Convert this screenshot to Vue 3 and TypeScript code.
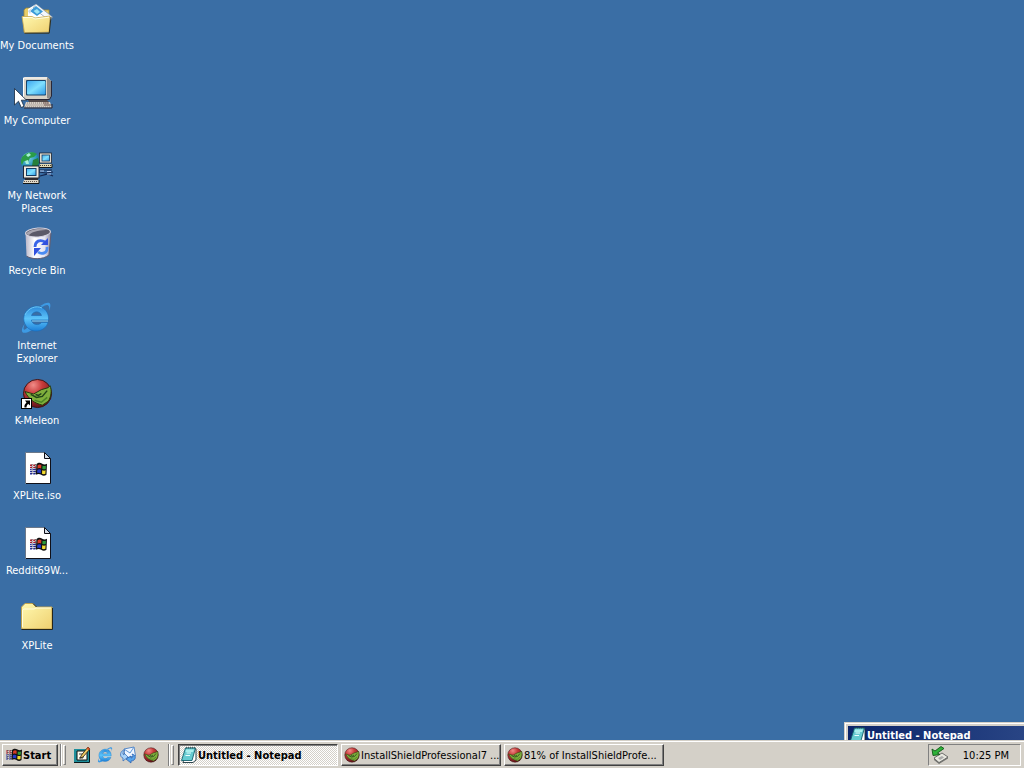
<script setup lang="ts">
import { ref } from 'vue'

interface DesktopItem {
  label: string
  icon: string
}

interface Task {
  label: string
  icon: string
}

const items: DesktopItem[] = [
  { label: 'My Documents', icon: 'documents' },
  { label: 'My Computer', icon: 'computer' },
  { label: 'My Network Places', icon: 'network' },
  { label: 'Recycle Bin', icon: 'recycle' },
  { label: 'Internet Explorer', icon: 'ie' },
  { label: 'K-Meleon', icon: 'kmeleon-link' },
  { label: 'XPLite.iso', icon: 'file' },
  { label: 'Reddit69W...', icon: 'file' },
  { label: 'XPLite', icon: 'folder' },
]

const quickLaunch: DesktopItem[] = [
  { label: 'Show Desktop', icon: 'show-desktop' },
  { label: 'Internet Explorer', icon: 'ie' },
  { label: 'Outlook Express', icon: 'mail' },
  { label: 'K-Meleon', icon: 'kmeleon' },
]

const tasks: Task[] = [
  { label: 'Untitled - Notepad', icon: 'notepad' },
  { label: 'InstallShieldProfessional7 ...', icon: 'kmeleon' },
  { label: '81% of InstallShieldProfe...', icon: 'kmeleon' },
]

const activeTask = ref(0)
</script>

<template>
  <div class="screen">
    <svg class="sprite" aria-hidden="true">
      <defs>
        <linearGradient id="g-folder" x1="0" y1="0" x2="1" y2="1">
          <stop offset="0" stop-color="#fff9b0" />
          <stop offset="1" stop-color="#efd070" />
        </linearGradient>
        <linearGradient id="g-screen" x1="0" y1="0" x2="1" y2="1">
          <stop offset="0" stop-color="#3fa8f0" />
          <stop offset="0.5" stop-color="#7fe0ff" />
          <stop offset="1" stop-color="#2f9be8" />
        </linearGradient>
        <linearGradient id="g-bin" x1="0" y1="0" x2="1" y2="0">
          <stop offset="0" stop-color="#b9b6c8" />
          <stop offset="0.35" stop-color="#ffffff" />
          <stop offset="0.75" stop-color="#e4e4f2" />
          <stop offset="1" stop-color="#8c8aa0" />
        </linearGradient>
        <linearGradient id="g-ie" x1="0" y1="0" x2="0" y2="1">
          <stop offset="0" stop-color="#2a86d8" />
          <stop offset="0.5" stop-color="#5cc4fa" />
          <stop offset="1" stop-color="#1c7fd8" />
        </linearGradient>
        <radialGradient id="g-ball" cx="0.35" cy="0.2" r="0.8">
          <stop offset="0" stop-color="#f08c88" />
          <stop offset="0.4" stop-color="#c83a3a" />
          <stop offset="1" stop-color="#64141a" />
        </radialGradient>
        <radialGradient id="g-globe" cx="0.35" cy="0.3" r="0.8">
          <stop offset="0" stop-color="#7fd8e8" />
          <stop offset="0.6" stop-color="#2490b8" />
          <stop offset="1" stop-color="#0c4c70" />
        </radialGradient>
      </defs>

      <symbol id="flag" viewBox="0 0 16 14">
        <path d="M6 2C8 0 10 .5 11.500 1.500S14.500 2.500 16 1.500L15.500 12C13.500 13.500 12 13 10.500 12S7.500 11 5.500 12Z" fill="#111" />
        <path d="M7.200 3C8.500 2 9.700 2.200 10.700 2.800L10.500 6C9.400 5.400 8.300 5.300 7 6Z" fill="#d83a24" />
        <path d="M11.800 3.400C13 3.900 14 3.900 15 3.400L14.800 6.500C13.800 7.100 12.600 6.900 11.600 6.500Z" fill="#2d9a38" />
        <path d="M6.900 7.200C8.200 6.500 9.400 6.600 10.400 7.200L10.200 10.600C9.200 10 8 9.900 6.700 10.400Z" fill="#2438c8" />
        <path d="M11.500 7.700C12.600 8.200 13.700 8.200 14.700 7.800L14.500 11C13.500 11.700 12.300 11.500 11.300 11Z" fill="#f4dc30" />
        <path d="M0 3h2M3 3h2M0 5h2M3 5h2.500" stroke="#b02030" stroke-width="1.200" />
        <path d="M0 7h1.500M2.500 7h3M0 9h2M3 9h2.500M0 11h2M3 11h2" stroke="#2830a0" stroke-width="1.200" />
        <path d="M2 2v10M5 2v10" stroke="#111" stroke-width=".8" stroke-dasharray="1 1" />
      </symbol>

      <symbol id="documents" viewBox="0 0 32 32" overflow="visible">
        <path d="M4 30V8L6 6H11L13 8H29V29Z" fill="#e8cd68" stroke="#a08838" stroke-width=".8" />
        <path d="M8 14V7L16 2L31 14V18H8Z" fill="#fff" />
        <path d="M16 2L32.500 15L30 19L13 6Z" fill="#f4f8fc" stroke="#6d8298" stroke-width=".6" />
        <path d="M16 4L23 9.500L17 14L10 9Z" fill="#3c9ad8" />
        <path d="M13.500 9L17 7L20 10L17 12Z" fill="#9be4f4" />
        <path d="M8 9L12 6L10 12Z" fill="#c8d8e8" />
        <path d="M2 14.500L12 14.500L15 16L30 14L29 30L4.500 31Z" fill="url(#g-folder)" stroke="#c8a850" stroke-width=".8" />
        <path d="M4.500 31.200H29.200L31 15" fill="none" stroke="#303020" />
        <path d="M3 15.500H12L15 17L29 15.200" fill="none" stroke="#fffde0" />
      </symbol>

      <symbol id="computer" viewBox="0 0 32 32" overflow="visible">
        <path d="M3 1L5 0H27L31 4V19L29 22H5L3 20Z" fill="#d8d2c6" />
        <path d="M27 0L31 4V19L29 22L27 21Z" fill="#8e8a88" />
        <path d="M3.500 20V1H27" fill="none" stroke="#fff" />
        <path d="M5 22.500H29.500L31.500 19V4" fill="none" stroke="#292838" />
        <rect x="6" y="3" width="20" height="15.500" rx="1" fill="#18446c" />
        <rect x="7" y="4" width="18.500" height="13.500" rx="1" fill="url(#g-screen)" />
        <path d="M8 23H27L29 25H9Z" fill="#504848" />
        <path d="M6 25H30L32 30.500H4Z" fill="#d7d0c6" />
        <path d="M7 26H29M6.500 28H29.500M5 30H31" stroke="#8a7f78" stroke-dasharray="1 1" />
        <path d="M4 31H32V27" fill="none" stroke="#302830" />
        <path d="M23 26h6M24 28h7" stroke="#785f58" />
      </symbol>

      <symbol id="network" viewBox="0 0 32 32" overflow="visible">
        <circle cx="10.500" cy="9.500" r="9.500" fill="url(#g-globe)" />
        <path d="M3 4C7 0 13-1 17 2L14 5L10 6L8 10L4 9L2 13C0 10 1 6 3 4Z" fill="#2b9c48" />
        <path d="M13 8L18 6L19 11L16 16L12 14Z" fill="#267f3c" />
        <path d="M6 3L9 1L11 3L8 5M5 9L8 8L9 12L6 12Z" fill="#a8f0d8" />
        <path d="M3 16L6 18" stroke="#0f4838" />
        <rect x="19.500" y="1" width="12" height="10" fill="#e2ddd1" stroke="#1b2230" stroke-width=".8" />
        <rect x="22" y="3" width="7.500" height="6" fill="url(#g-screen)" stroke="#123a60" stroke-width=".8" />
        <path d="M20 12H32V15H19Z" fill="#e0d8b4" />
        <path d="M20 13.500H31" stroke="#4a4338" stroke-dasharray="1 1" />
        <path d="M19 15.500H32V12" fill="none" stroke="#171818" />
        <path d="M19 18H32M19 20L26 21L33 20M20 24L28 22L33 24" fill="none" stroke="#15264d" stroke-width="1.200" />
        <path d="M20 19H24M27 22H31M27 19.500h4" stroke="#b0c8ef" />
        <rect x="3.500" y="14" width="15.500" height="12" fill="#ece8df" stroke="#171b2a" stroke-width=".9" />
        <rect x="6.500" y="16.500" width="9.500" height="7" fill="url(#g-screen)" stroke="#153c64" />
        <path d="M5 26H18V28H5Z" fill="#302c30" />
        <path d="M4 28H19V31H3Z" fill="#dfd8c8" />
        <path d="M4 29.500H18" stroke="#665850" stroke-dasharray="1 1" />
        <path d="M3 31.500H19V28" fill="none" stroke="#171818" />
      </symbol>

      <symbol id="recycle" viewBox="0 0 32 32" overflow="visible">
        <path d="M5.500 6L6.500 29C11 32 23 33 29 28L31 5Z" fill="url(#g-bin)" />
        <path d="M6.500 29C11 32.500 23 33 29 28L31 6" fill="none" stroke="#625e72" />
        <ellipse cx="18" cy="5.500" rx="12.500" ry="4.500" transform="rotate(-4 18 5.500)" fill="#5b5968" stroke="#d5d3df" />
        <path d="M6 7C9 2 20 1 28 3C22 3 12 4 9 8Z" fill="#a8a5b0" />
        <path d="M15 20C15 14 20 12 25 15" fill="none" stroke="#3864e8" stroke-width="2.800" />
        <path d="M21 18L28 18L28 11Z" fill="#3151df" />
        <path d="M27 20C28 26 22 28 18 25" fill="none" stroke="#4b8bf2" stroke-width="2.800" />
        <path d="M21 21L14 21L14 29Z" fill="#3151df" />
      </symbol>

      <symbol id="ie" viewBox="0 0 32 32" overflow="visible">
        <path d="M5 21C-1 30 2 34 12 28L8 25C4 29 2 29 5 21ZM20 4C28-1 33-1 29 9C30 3 28 1 22 5Z" fill="#3d9ae4" />
        <path fill-rule="evenodd" d="M28.500 18H11.500C12 23 19 24 21.500 20.500H28C25.500 29 15 31.500 8.500 26.500C2 21 2.500 12 8 7.500C17 0 29.500 6 28.500 18ZM11.500 13.500H21.500C20.500 8.500 13 8.500 11.500 13.500Z" fill="url(#g-ie)" stroke="#176bb8" stroke-width=".6" />
        <path d="M5 13C8 6 16 3 22 6" fill="none" stroke="#6cc6f4" stroke-width="1" />
        <path d="M12 19H28" stroke="#8ad9ff" stroke-width="1" />
      </symbol>

      <symbol id="kmeleon" viewBox="0 0 32 32">
        <circle cx="16" cy="16" r="14.500" fill="url(#g-ball)" stroke="#3b1414" />
        <path d="M3 14L12 16.500L20 12L27 10L29 8C31 13 30 20 27 24L21 28C13 26 7 22 3 14Z" fill="#7fae3c" stroke="#24380e" />
        <path d="M9 17L15 20L21 19L26 13M14 17L17 18L20 16" fill="none" stroke="#22441a" stroke-width="1.500" />
        <path d="M13 23L20 25L26 20" fill="none" stroke="#4a8425" stroke-width="1.500" />
      </symbol>

      <symbol id="kmeleon-link" viewBox="0 0 32 32" overflow="visible">
        <use href="#kmeleon" x="2" y="1" width="31" height="31" />
        <rect x="1.500" y="21.500" width="10" height="10" fill="#fff" stroke="#000" />
        <path d="M5 23.500H10V28.500L8.500 27C7 27.500 6.500 29 6.500 30.500H4.500C4 28.500 5 27 6.500 25.500Z" fill="#000" />
      </symbol>

      <symbol id="file" viewBox="0 0 32 32">
        <path d="M5.500 .5H24.500L30.500 6.500V31.500H5.500Z" fill="#fff" stroke="#6b7889" />
        <path d="M24.500 .5V6.500H30.500" fill="#d4dce6" stroke="#0d0d15" />
        <path d="M6 31.500H30.500V6.500L24.500 .5" fill="none" stroke="#101018" />
        <use href="#flag" x="10" y="10" width="17" height="15" />
      </symbol>

      <symbol id="folder" viewBox="0 0 32 32" overflow="visible">
        <path d="M1.500 26V5L5 1.500H13L16.500 5H32V27H2Z" fill="url(#g-folder)" stroke="#c0a24e" />
        <path d="M2.500 25V8L4 7H14L16 6H31" fill="none" stroke="#fffde0" />
        <path d="M13 1.500L16.500 5M1.500 27.500H32.500V6" fill="none" stroke="#26261b" />
      </symbol>

      <symbol id="show-desktop" viewBox="0 0 16 16" overflow="visible">
        <rect x="0" y="2" width="15" height="14" fill="#1f8f9c" />
        <path d="M0 15.500H15.500V2" fill="none" stroke="#0b1a1c" />
        <path d="M3 4H13V13H3Z" fill="#fffdf0" stroke="#111" />
        <path d="M5 7H9V11H5" fill="none" stroke="#444" />
        <path d="M14 0L16 2L9 10L6 11L7.500 8Z" fill="#f0c860" stroke="#221a10" stroke-width=".8" />
        <path d="M14 0L16 2L14.500 3.500L12.500 1.500Z" fill="#d2542c" />
      </symbol>

      <symbol id="mail" viewBox="0 0 16 16" overflow="visible">
        <path d="M4 2L14 0L15.500 9L5 11Z" fill="#eef5ff" stroke="#3672be" stroke-width=".8" />
        <path d="M4 2L10 6L14 0" fill="none" stroke="#5f97d7" />
        <path d="M12 7C17 8 16 14 11 14V16L6 12L11 9V11C13 11 13.500 9 12 7Z" fill="#56a5ec" stroke="#2359ad" stroke-width=".7" />
        <path d="M5 3C0 3-1 10 3 11V14L8 10L4 6V8C2 7 3 5 5 3Z" fill="#a8d2f8" stroke="#2c65b5" stroke-width=".7" />
      </symbol>

      <symbol id="notepad" viewBox="0 0 16 16" overflow="visible">
        <path d="M5 2H15V13L12 15.500H2Z" fill="#fff" stroke="#173038" stroke-width=".9" />
        <path d="M4.500 1H14.500L11 13.500H.5Z" fill="#66cbd1" stroke="#14606c" stroke-width=".9" />
        <path d="M5 2.500H13L12 5H4.500Z" fill="#a9f0ee" />
        <path d="M5.500 6H10M4.500 8.500H9" stroke="#e8ffff" stroke-width="1.200" />
        <path d="M5 .8H15" stroke="#253c42" stroke-dasharray="1 1" />
      </symbol>

      <symbol id="eject" viewBox="0 0 18 18">
        <path d="M3 12L11 7L17 11L8 17Z" fill="#e8e8e0" stroke="#515151" stroke-width=".8" />
        <path d="M3 12V14L8 18L17 12.500V11L8 16Z" fill="#737370" />
        <path d="M7 12L11 10L13 11.500L9 14Z" fill="#aaa" />
        <path d="M1 3L2 9.500L9 8.500L6.500 7L13 2.500L10 .5L4 5Z" fill="#2eb339" stroke="#125719" stroke-width=".9" />
      </symbol>
    </svg>

    <main class="desktop">
      <nav class="icons" aria-label="Desktop">
        <button v-for="item in items" :key="item.label" class="item" type="button">
          <svg class="item-icon" aria-hidden="true"><use :href="'#' + item.icon" /></svg>
          <span class="item-label">{{ item.label }}</span>
        </button>
      </nav>

      <section class="window" aria-label="Untitled - Notepad">
        <header class="titlebar">
          <svg class="small-icon" aria-hidden="true"><use href="#notepad" /></svg>
          <span>Untitled - Notepad</span>
        </header>
      </section>
    </main>

    <footer class="taskbar">
      <button class="start" type="button">
        <svg class="start-flag" aria-hidden="true"><use href="#flag" /></svg>
        <span>Start</span>
      </button>
      <i class="divider"></i>
      <i class="grip"></i>
      <div class="quick">
        <button v-for="q in quickLaunch" :key="q.label" class="quick-button" type="button" :aria-label="q.label">
          <svg class="small-icon" aria-hidden="true"><use :href="'#' + q.icon" /></svg>
        </button>
      </div>
      <i class="divider"></i>
      <i class="grip"></i>
      <div class="tasks">
        <button
          v-for="(task, index) in tasks"
          :key="task.label"
          class="task"
          :class="{ active: index === activeTask }"
          type="button"
          @click="activeTask = index"
        >
          <svg class="small-icon" aria-hidden="true"><use :href="'#' + task.icon" /></svg>
          <span class="task-label">{{ task.label }}</span>
        </button>
      </div>
      <div class="tray">
        <svg class="tray-icon" aria-hidden="true"><use href="#eject" /></svg>
        <time>10:25 PM</time>
      </div>
    </footer>

    <svg class="pointer" viewBox="0 0 13 21" aria-hidden="true">
      <path d="M.5 .5V17L4.500 13.200L7.200 19.500L10 18.300L7.300 12.200H12.500Z" fill="#fff" stroke="#16283c" stroke-width=".8" />
    </svg>
  </div>
</template>

<style>
body {
  margin: 0;
}
</style>

<style scoped>
.screen {
  position: relative;
  display: flex;
  flex-direction: column;
  height: 100vh;
  overflow: hidden;
  background: #3a6ea5;
  color: #000;
  font: 11px/13px Tahoma, "DejaVu Sans Condensed", "Noto Sans", sans-serif;
}

.sprite {
  position: absolute;
  width: 0;
  height: 0;
}

button {
  margin: 0;
  padding: 0;
  border: 0;
  background: none;
  color: inherit;
  font: inherit;
}

.desktop {
  position: relative;
  flex: 1;
  min-height: 0;
  overflow: hidden;
}

.icons {
  display: grid;
  grid-template-columns: 72px;
  grid-auto-rows: 75px;
}

.item {
  display: flex;
  flex-direction: column;
  align-items: center;
  gap: 5px;
  padding-top: 2px;
  color: #fff;
}

.item-icon {
  flex: none;
  width: 32px;
  height: 32px;
  overflow: visible;
}

.item-label {
  width: 78px;
  padding-left: 2px;
  text-align: center;
}

.small-icon {
  flex: none;
  width: 16px;
  height: 16px;
  overflow: visible;
}

.window {
  position: absolute;
  left: calc(100% - 180px);
  bottom: 0;
  width: 900px;
  height: 18px;
  box-sizing: border-box;
  padding: 3px 3px 0;
  border: solid #d4d0c8;
  border-width: 1px 0 0 1px;
  background: #d4d0c8;
  box-shadow: inset 1px 1px #fff;
}

.titlebar {
  display: flex;
  align-items: center;
  gap: 1px;
  height: 18px;
  padding-left: 2px;
  background: linear-gradient(90deg, #0a246a, #a6caf0);
  color: #fff;
  font-weight: bold;
}

.taskbar {
  display: flex;
  flex: none;
  align-items: stretch;
  height: 22px;
  padding: 3px 3px 2px 2px;
  border-top: 1px solid #d4d0c8;
  background: #d4d0c8;
  box-shadow: inset 0 1px #fff;
}

.start,
.task {
  display: flex;
  align-items: center;
  box-sizing: border-box;
  border: 1px solid;
  border-color: #fff #404040 #404040 #fff;
  box-shadow: inset -1px -1px #808080;
}

.start {
  width: 56px;
  padding-left: 3px;
  gap: 1px;
  font-weight: bold;
}

.start-flag {
  flex: none;
  width: 16px;
  height: 14px;
}

.divider {
  flex: none;
  width: 1px;
  margin-left: 2px;
  border-right: 1px solid #fff;
  background: #808080;
}

.grip {
  flex: none;
  box-sizing: border-box;
  width: 3px;
  margin: 1px 4px 1px 1px;
  border: 1px solid;
  border-color: #fff #808080 #808080 #fff;
}

.quick {
  display: flex;
  width: 96px;
}

.quick-button {
  display: flex;
  align-items: center;
  justify-content: center;
  width: 23px;
}

.tasks {
  display: flex;
  flex: 1;
  gap: 3px;
  min-width: 0;
}

.task {
  flex: 0 1 160px;
  gap: 1px;
  min-width: 0;
  padding-left: 2px;
}

.task-label {
  white-space: nowrap;
}

.task.active {
  border-color: #404040 #fff #fff #404040;
  background: repeating-conic-gradient(#fff 0 25%, #d4d0c8 0 50%) 0 0 / 2px 2px;
  box-shadow: inset 1px 1px #808080;
  font-weight: bold;
}

.tray {
  display: flex;
  align-items: center;
  justify-content: space-between;
  box-sizing: border-box;
  width: 93px;
  padding: 0 11px 0 2px;
  border: 1px solid;
  border-color: #808080 #fff #fff #808080;
}

.tray-icon {
  width: 18px;
  height: 18px;
}

.pointer {
  position: absolute;
  left: 14px;
  top: 88px;
  width: 13px;
  height: 21px;
}
</style>
